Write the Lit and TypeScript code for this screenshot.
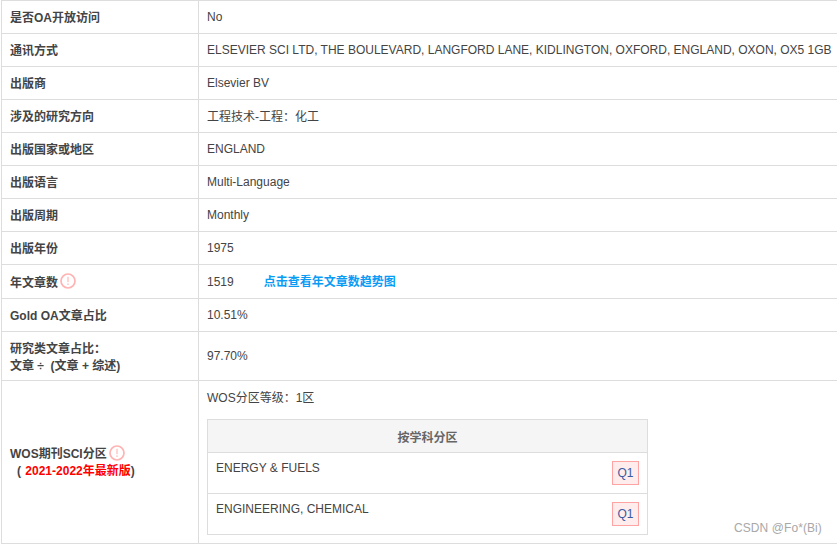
import { LitElement, html, css } from "lit";
import { customElement } from "lit/decorators.js";

const info = html`<svg class="info" viewBox="0 0 16 16" width="16" height="16" aria-hidden="true"><circle cx="8" cy="8" r="7" fill="none" stroke="#ffb3b3" stroke-width="1.7"/><rect x="7.3" y="3.8" width="1.4" height="5.4" fill="#ffc4c4"/><rect x="7.3" y="10.4" width="1.4" height="1.6" fill="#ffc4c4"/></svg>`;

const rows: [string, string][] = [
  ["是否OA开放访问", "No"],
  ["通讯方式", "ELSEVIER SCI LTD, THE BOULEVARD, LANGFORD LANE, KIDLINGTON, OXFORD, ENGLAND, OXON, OX5 1GB"],
  ["出版商", "Elsevier BV"],
  ["涉及的研究方向", "工程技术-工程：化工"],
  ["出版国家或地区", "ENGLAND"],
  ["出版语言", "Multi-Language"],
  ["出版周期", "Monthly"],
  ["出版年份", "1975"],
];

@customElement("app-root")
export class AppRoot extends LitElement {
  static styles = css`
    :host {
      display: block;
      width: 837px;
      height: 544px;
      position: relative;
      overflow: hidden;
      background: #fff;
      font-family: "Liberation Sans", "Noto Sans CJK SC", sans-serif;
      font-size: 12px;
      color: #444;
    }
    .table {
      display: grid;
      grid-template-columns: 197px 660px;
      margin-left: 1px;
      border-top: 1px solid #ddd;
      border-left: 1px solid #ddd;
      width: 860px;
    }
    .k, .v {
      border-bottom: 1px solid #ddd;
      display: flex;
      align-items: center;
      box-sizing: border-box;
    }
    .k {
      border-right: 1px solid #ddd;
      padding-left: 8px;
      padding-bottom: 2px;
      font-weight: 700;
      color: #444;
    }
    .v { padding-left: 8px; padding-bottom: 1px; white-space: nowrap; }
    .h33 { height: 33px; }
    .h34 { height: 34px; }
    .h49 { height: 49px; }
    .h163 { height: 163px; }
    .info { margin-left: 2px; flex: none; }
    .year-k { padding-bottom: 1px; }
    .year-v { padding-bottom: 0; }
    .link { color: #0a9cf5; font-weight: 700; margin-left: 30px; margin-bottom: 2px; }
    .red { color: #f00; margin-left: 1px; }
    .two { display: block; line-height: 17px; }
    .ratio-k { padding-bottom: 0; padding-top: 3px; }
    .wos-cell { padding-bottom: 0; }
    .wos { flex-direction: column; align-items: flex-start; justify-content: flex-start; padding-top: 7px; padding-bottom: 0; }
    .wos-k { display: block; }
    .wos-k .l1 { display: flex; align-items: center; }
    .wos-k .l2 { padding-left: 7px; padding-top: 1px; line-height: 18px; }
    .sub {
      margin-top: 14px;
      width: 441px;
      border: 1px solid #ddd;
      box-sizing: border-box;
    }
    .sub-h {
      height: 33px;
      box-sizing: border-box;
      background: #f5f5f5;
      border-bottom: 1px solid #ddd;
      display: flex;
      align-items: center;
      justify-content: center;
      font-weight: 700;
      color: #666;
    }
    .sub-r {
      height: 41px;
      display: flex;
      justify-content: space-between;
      padding: 8px 8px 0 8px;
      box-sizing: border-box;
      border-bottom: 1px solid #ddd;
    }
    .sub-r:last-child { border-bottom: 0; height: 40px; }
    .q {
      width: 27px;
      height: 24px;
      box-sizing: border-box;
      border: 1px solid #ffa3a3;
      background: #ffecec;
      color: #3a5ba0;
      display: flex;
      align-items: center;
      justify-content: center;
    }
    .mark {
      position: absolute;
      left: 734px;
      top: 521px;
      color: #a8a8a8;
      font-size: 12px;
      letter-spacing: 0.08px;
    }
  `;

  render() {
    return html`
      <div class="table">
        ${rows.map(
          ([k, v]) => html`<div class="k h33">${k}</div><div class="v h33">${v}</div>`
        )}
        <div class="k h34 year-k">年文章数${info}</div>
        <div class="v h34 year-v">1519<span class="link">点击查看年文章数趋势图</span></div>
        <div class="k h33">Gold OA文章占比</div>
        <div class="v h33">10.51%</div>
        <div class="k h49 ratio-k"><span class="two">研究类文章占比：<br />文章 ÷ &nbsp;(文章 + 综述)</span></div>
        <div class="v h49">97.70%</div>
        <div class="k h163 wos-cell">
          <div class="wos-k">
            <div class="l1">WOS期刊SCI分区${info}</div>
            <div class="l2">( <span class="red">2021-2022年最新版</span>)</div>
          </div>
        </div>
        <div class="v h163 wos">
          <div>WOS分区等级：1区</div>
          <div class="sub">
            <div class="sub-h">按学科分区</div>
            <div class="sub-r"><span>ENERGY &amp; FUELS</span><span class="q">Q1</span></div>
            <div class="sub-r"><span>ENGINEERING, CHEMICAL</span><span class="q">Q1</span></div>
          </div>
        </div>
      </div>
      <div class="mark">CSDN @Fo*(Bi)</div>
    `;
  }
}
